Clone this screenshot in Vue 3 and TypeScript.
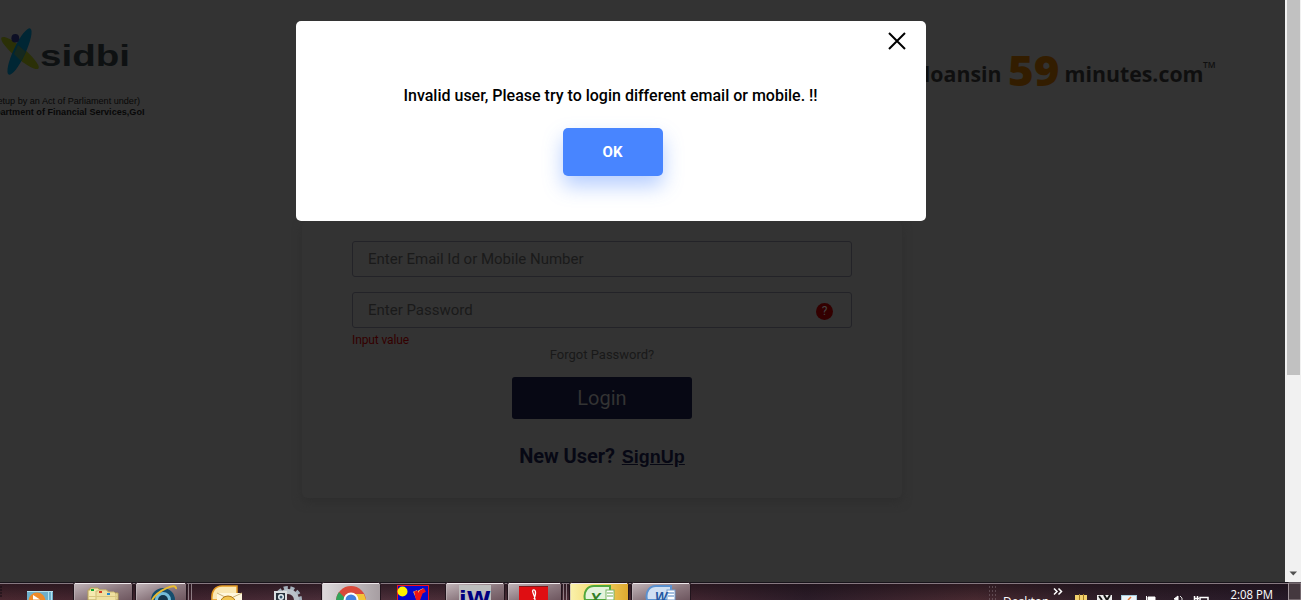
<script setup lang="ts">
import { ref } from 'vue'

const message = 'Invalid user, Please try to login different email or mobile. !!'
const email = ref('')
const password = ref('')
</script>

<template>
  <div class="screen">
    <div class="browser">
      <main class="page">
        <header class="header">
          <svg class="sidbi" width="160" height="120" viewBox="0 0 160 120">
            <ellipse cx="20" cy="53" rx="24" ry="5.6" transform="rotate(40 20 53)" fill="#2b3007" />
            <ellipse cx="19.5" cy="51.5" rx="25.5" ry="6" transform="rotate(-65 19.5 51.5)" fill="#002634" />
            <path d="M18 45 L26 52 L21 61 L14 54 Z" fill="#15281f" />
            <ellipse cx="15.3" cy="38.3" rx="3.9" ry="4.3" fill="#0d0f25" />
            <text class="sidbi-name" x="40" y="66" textLength="90" lengthAdjust="spacingAndGlyphs">sidbi</text>
            <text class="sidbi-note" x="140" y="104" text-anchor="end">(Setup by an Act of Parliament under)</text>
            <text class="sidbi-note strong" x="144.500" y="115" text-anchor="end">Department of Financial Services,GoI</text>
          </svg>
          <svg class="brand" width="385" height="60" viewBox="0 0 385 60">
            <text class="brand-text first" x="101.500" y="42" text-anchor="end">psbloansin</text>
            <text class="brand-number" x="108" y="46" textLength="51.500" lengthAdjust="spacingAndGlyphs">59</text>
            <text class="brand-text" x="164.500" y="42" textLength="139" lengthAdjust="spacingAndGlyphs">minutes.com</text>
            <text class="brand-tm" x="303" y="28" textLength="12.500" lengthAdjust="spacingAndGlyphs">TM</text>
          </svg>
        </header>

        <form class="card" @submit.prevent>
          <input v-model="email" class="field" placeholder="Enter Email Id or Mobile Number" />
          <div class="password">
            <input v-model="password" type="password" class="field" placeholder="Enter Password" />
            <span class="help">?</span>
          </div>
          <div class="error">Input value</div>
          <a class="forgot">Forgot Password?</a>
          <button class="login">Login</button>
          <div class="new-user"><span>New User?</span><a>SignUp</a></div>
        </form>

        <section class="modal">
          <svg class="close" width="18" height="18" viewBox="0 0 18 18">
            <path d="M1 1 L17 17 M17 1 L1 17" stroke="#000" stroke-width="2" />
          </svg>
          <p>{{ message }}</p>
          <button class="ok">OK</button>
        </section>
      </main>
      <aside class="scrollbar">
        <div class="thumb"></div>
        <svg width="16" height="18" viewBox="0 0 16 18"><path d="M4.500 7.500 H12 L8.250 11.500 Z" fill="#505050" /></svg>
      </aside>
    </div>

    <footer class="taskbar">
      <svg width="1301" height="18" viewBox="0 0 1301 18">
        <defs>
          <linearGradient id="bar" x1="0" x2="1" y1="0" y2="0">
            <stop offset="0" stop-color="#4a2830" /><stop offset=".13" stop-color="#40232e" />
            <stop offset=".27" stop-color="#4d303b" /><stop offset=".5" stop-color="#482832" />
            <stop offset=".62" stop-color="#2c1d29" /><stop offset=".75" stop-color="#492a31" />
            <stop offset=".83" stop-color="#33212b" /><stop offset="1" stop-color="#271a29" />
          </linearGradient>
          <linearGradient id="tab" x1="0" x2="1" y1="0" y2="1">
            <stop offset="0" stop-color="#c5b9bd" /><stop offset=".55" stop-color="#8a767d" /><stop offset="1" stop-color="#69515a" />
          </linearGradient>
          <linearGradient id="active" x1="0" x2="1"><stop offset="0" stop-color="#dedbdd" /><stop offset="1" stop-color="#a69da1" /></linearGradient>
          <linearGradient id="gold" x1="0" x2="1"><stop offset="0" stop-color="#faf2ad" /><stop offset=".5" stop-color="#f3d769" /><stop offset="1" stop-color="#dfa82e" /></linearGradient>
          <linearGradient id="shade" x1="0" x2="0" y1="0" y2="1"><stop offset="0" stop-color="#160c13" stop-opacity=".55" /><stop offset="1" stop-color="#160c13" stop-opacity="0" /></linearGradient>
        </defs>
        <rect width="1301" height="18" fill="url(#bar)" />
        <rect y="2" width="1301" height="16" fill="url(#shade)" />
        <rect width="1301" height="1" fill="#17131a" />
        <rect y="1" width="1288" height="1" fill="#877981" />

        <g stroke="#21141c">
          <rect x="73.500" y=".5" width="59" height="20" rx="2" fill="url(#tab)" />
          <rect x="135.500" y=".5" width="51" height="20" rx="2" fill="url(#tab)" />
          <rect x="321.500" y=".5" width="59" height="20" rx="2" fill="url(#active)" />
          <rect x="445.500" y=".5" width="59" height="20" rx="2" fill="url(#tab)" />
          <rect x="507.500" y=".5" width="54" height="20" rx="2" fill="url(#tab)" />
          <rect x="569.500" y=".5" width="59" height="20" rx="2" fill="url(#gold)" />
          <rect x="631.500" y=".5" width="59" height="20" rx="2" fill="url(#tab)" />
        </g>
        <path d="M75 1.500H131M137 1.500H185M323 1.500H379M447 1.500H503M509 1.500H560M571 1.500H627M633 1.500H689" stroke="#eee8eb" />
        <path d="M74.500 2V18M136.500 2V18M322.500 2V18M446.500 2V18M508.500 2V18M570.500 2V18M632.500 2V18M188.500 2V18M191.500 2V18M563.500 2V18M566.500 2V18" stroke="#c7bbc0" stroke-opacity=".6" />
        <path d="M0 5H2M0 8H2M0 11H2M0 14H2" stroke="#130d12" />

        <g>
          <rect x="27" y="9" width="26" height="10" fill="#6eb0cc" />
          <path d="M27 9.500H53M48.500 10V18M51.500 10V18" stroke="#b3e2f1" />
          <circle cx="37" cy="19" r="8.500" fill="#ee8b2a" /><path d="M33 13L40 17.500H33Z" fill="#fff" />
        </g>
        <g>
          <path d="M88 18V8H90V6H98L100 8H107L109 11H118V18Z" fill="#f5e9b0" stroke="#b7a157" />
          <path d="M96 18V9H98V8H106L108 10H114L116 12V18" fill="#efe0a0" stroke="#cdbb76" />
          <path d="M88.500 14.500H118" stroke="#d9c680" />
          <rect x="91" y="7" width="3" height="2" fill="#10a832" /><rect x="99" y="9" width="3" height="2" fill="#d43a22" /><rect x="107" y="11" width="3" height="2" fill="#218ad2" />
        </g>
        <g fill="none">
          <circle cx="163" cy="18" r="10" fill="#74bdd7" stroke="#164d6d" stroke-width="4" />
          <circle cx="163" cy="18" r="5" fill="#15364a" />
          <path d="M152 18C158 8 177 0 176 7" stroke="#eabb30" stroke-width="2" />
        </g>
        <g>
          <path d="M212 18C211 8 216 4 222 4H237V18Z" fill="#fae8b5" stroke="#e59b22" stroke-width="1.500" />
          <path d="M217 11H242V18H217Z" fill="#fff7dd" /><path d="M217 11L229 17L242 11" fill="none" stroke="#c9b078" />
          <circle cx="228" cy="22" r="8" fill="#f1c551" stroke="#b47a19" />
        </g>
        <g>
          <circle cx="288" cy="18" r="12" fill="none" stroke="#a6b2bd" stroke-width="4" stroke-dasharray="4 2.500" />
          <circle cx="288" cy="18" r="8.500" fill="none" stroke="#bac3ca" stroke-width="5" />
          <rect x="274" y="9" width="13" height="9" fill="#d9dde0" /><rect x="276" y="11" width="9" height="7" fill="#26313c" /><circle cx="281" cy="15" r="3" fill="#e7eff4" /><circle cx="281" cy="15" r="1.500" fill="#34536a" />
        </g>
        <g>
          <circle cx="351" cy="19" r="15" fill="#d94a3b" /><path d="M336 19A15 15 0 0 1 339 10L347 18Z" fill="#31a45b" />
          <path d="M351 12H364L366 18H351Z" fill="#f1c537" /><circle cx="351" cy="18" r="7.500" fill="#fff" /><circle cx="351" cy="18" r="5.500" fill="#4382df" />
        </g>
        <g>
          <rect x="397.500" y="3.500" width="31" height="17" fill="#0808ce" stroke="#f01020" />
          <circle cx="402.500" cy="9.500" r="5" fill="#fff200" />
          <path d="M415 9L418 16L420 10L424 8" fill="none" stroke="#ffe66c" stroke-width="4" /><path d="M416 9L418 18L421 10L425 8" fill="none" stroke="#ef1516" stroke-width="4" />
        </g>
        <g>
          <rect x="459" y="3" width="32" height="15" fill="#bdbdbd" />
          <text class="iw" x="459" y="23" textLength="32" lengthAdjust="spacingAndGlyphs">iW</text>
        </g>
        <g>
          <rect x="519" y="4" width="29" height="14" fill="#df0e12" /><rect x="519" y="4" width="29" height="1" fill="#851617" />
          <path d="M534 17C537 10 535 7 533 8C531 10 535 12 535 18" fill="none" stroke="#fff" stroke-width="1.300" />
        </g>
        <g>
          <path d="M585 18C583 9 588 4 594 4H610V18Z" fill="#e4f3dc" stroke="#52a83c" stroke-width="2" />
          <rect x="606" y="8" width="8" height="10" fill="#fff" stroke="#78b465" /><path d="M607 11H613M607 14H613" stroke="#6aab50" />
          <text class="office excel" x="590" y="23">X</text>
        </g>
        <g>
          <path d="M647 18C645 9 650 4 656 4H671V18Z" fill="#d0e0f3" stroke="#5b91d0" stroke-width="2" />
          <rect x="667" y="8" width="8" height="10" fill="#fff" stroke="#759bcc" /><path d="M668 11H674M668 14H674" stroke="#477fc0" />
          <text class="office word" x="655" y="19">W</text>
        </g>

        <path d="M989 5H997M989 9H997M989 13H997M989 17H997" stroke="#817079" stroke-dasharray="1 2" />
        <text class="tray" x="1003" y="24">Desktop</text>
        <path d="M1054 6.500L1057 9.500L1054 12.500M1058.500 6.500L1061.500 9.500L1058.500 12.500" fill="none" stroke="#fff" stroke-width="1.500" />
        <path d="M1075 13H1087V18H1075Z" fill="#f3d36e" /><path d="M1079.500 12V18M1083.500 12V18" stroke="#a47922" />
        <rect x="1097" y="13" width="15" height="5" fill="#eee" /><path d="M1099 14L1102 18M1104 13L1107 18M1110 13L1107 18" stroke="#161616" stroke-width="2" />
        <rect x="1121.500" y="13.500" width="15" height="6" fill="#edf4f8" stroke="#a3cbdd" /><path d="M1128 18L1131 15" stroke="#e67631" stroke-width="1.500" />
        <path d="M1146.500 14V18M1148 15H1155V18H1148ZM1178 14V18L1174 17Z" fill="#fff" stroke="#fff" /><path d="M1180 14Q1183 16 1182 18" fill="none" stroke="#ddd" />
        <path d="M1194.500 18V14M1197.500 18V14M1194 16.500H1199M1200 15.500H1208V19H1200Z" fill="none" stroke="#fff" stroke-width="1.500" />
        <text class="tray" x="1230.500" y="16.500" textLength="42.500" lengthAdjust="spacingAndGlyphs">2:08 PM</text>
        <path d="M1288.500 1V18H1301V1Z" fill="#44383f" stroke="#a2969c" />
      </svg>
    </footer>
  </div>
</template>

<style>
body { overflow: hidden; background: #333; }
</style>

<style scoped>
* { box-sizing: border-box; }
.screen { width: 1301px; height: 600px; display: flex; flex-direction: column; overflow: hidden; font-family: Roboto, sans-serif; }
.browser { height: 582px; display: flex; }
.page { position: relative; width: 1285px; height: 582px; background: #333; }
.header { height: 221px; display: flex; justify-content: space-between; }
.sidbi-name { font: bold 30px "Liberation Sans", sans-serif; fill: #0e1112; }
.sidbi-note { font: 9.1px "Liberation Sans", sans-serif; fill: #080808; }
.sidbi-note.strong { font-weight: bold; }
.brand { margin-top: 40px; }
.brand-text { font: bold 22px "Open Sans", sans-serif; fill: #0f0f0f; }
.brand-text.first { font-size: 21.3px; }
.brand-number { font: 800 43px "Open Sans", sans-serif; fill: #331d00; }
.brand-tm { font: 600 9px "Open Sans", sans-serif; fill: #0f0f0f; }

.card { width: 600px; height: 277px; margin-left: 302px; padding: 20px 50px 0; display: flex; flex-direction: column; align-items: center; border-radius: 5px; background: #333; box-shadow: 0 4px 10px #2e2e2e; }
.field { display: block; width: 500px; height: 36px; padding: 0 15px; border: 1px solid #232328; border-radius: 3px; background: transparent; outline: none; font: 15px Roboto, sans-serif; color: #1b1b1b; }
.field::placeholder { color: #1a1a1a; opacity: 1; }
.password { position: relative; margin-top: 15px; }
.help { position: absolute; top: 11px; right: 19px; width: 17px; height: 17px; border-radius: 50%; background: #330000; color: #444; font-size: 12px; line-height: 17px; text-align: center; }
.error { align-self: flex-start; margin-top: 4px; color: #330000; font-size: 12px; letter-spacing: -0.12px; line-height: 16px; }
.forgot { margin-top: -1px; color: #191919; font-size: 13px; line-height: 16px; }
.login { width: 180px; height: 42px; margin-top: 14px; padding: 0; border: 0; border-radius: 3px; background: #070814; color: #333; font: 20px Roboto, sans-serif; }
.new-user { display: flex; align-items: baseline; gap: 7px; margin-top: 25px; color: #070814; font-size: 20px; font-weight: 700; letter-spacing: -0.05px; line-height: 24px; }
.new-user a { font: bold 18px "Liberation Sans", sans-serif; letter-spacing: 0; text-decoration: underline; }

.modal { position: absolute; left: 296px; top: 21px; width: 630px; height: 200px; padding-top: 64px; display: flex; flex-direction: column; align-items: center; border-radius: 5px; background: #fff; color: #000; }
.close { position: absolute; right: 20px; top: 11px; }
.modal p { margin: 0 1px 0 0; font-size: 16px; font-weight: 500; line-height: 21px; }
.ok { width: 100px; height: 48px; flex: none; margin: 22px 0 0 4px; padding: 0 1px 0 0; border: 0; border-radius: 5px; background: #4885ff; color: #fff; box-shadow: 0 10px 20px rgba(72, 133, 255, .4); font: bold 15px Roboto, sans-serif; }

.scrollbar { width: 16px; display: flex; flex-direction: column; justify-content: space-between; background: #f1f1f1; }
.thumb { width: 13px; height: 375px; margin-left: 2px; background: #c1c1c1; }
.taskbar { height: 18px; }
.taskbar svg { display: block; }
.iw { font: bold 20px "DejaVu Sans", sans-serif; fill: #000080; }
.office { font: italic bold 16px "Liberation Sans", sans-serif; }
.excel { fill: #327f27; }
.word { font-size: 13px; fill: #2458a2; }
.tray { font: 12px "Open Sans", sans-serif; fill: #fff; }
</style>
